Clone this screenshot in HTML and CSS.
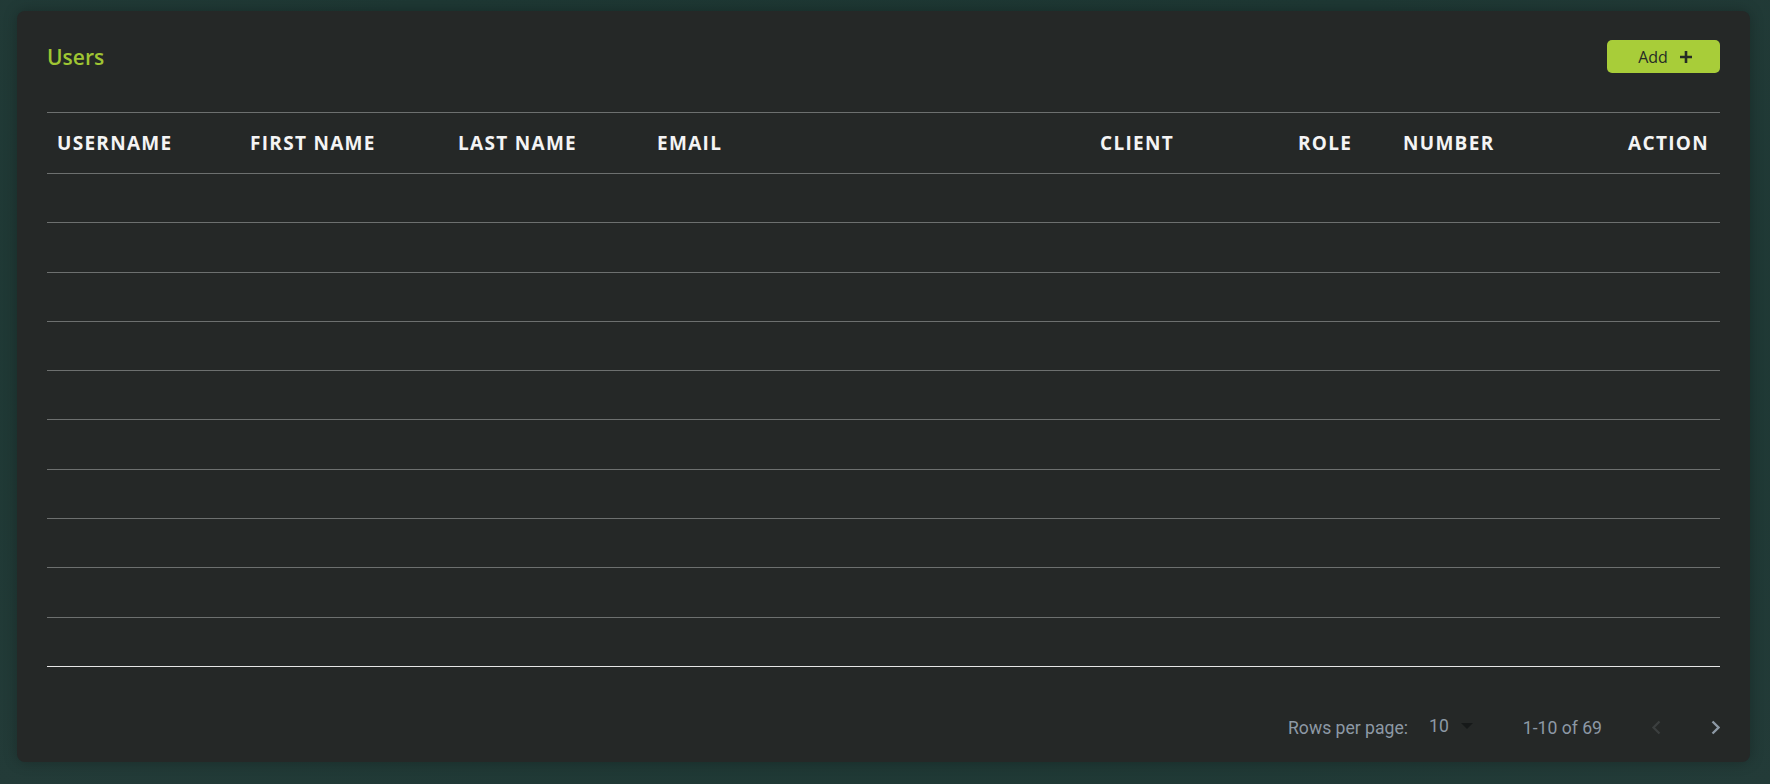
FILE: index.html
```html
<!DOCTYPE html>
<html lang="en">

<head>
    <meta charset="UTF-8">
    <meta name="viewport" content="width=device-width, initial-scale=1.0">
    <title>Users</title>
    <link rel="stylesheet" href="styles.css">
</head>

<body>
    <div class="card">
        <div class="card-head">
            <h2 class="title">Users</h2>
            <button class="add-btn" type="button">Add
                <svg width="14" height="14" viewBox="0 0 14 14"><path d="M7 1v12M1 7h12" stroke="#252a25" stroke-width="2.6"/></svg>
            </button>
        </div>

        <table class="users">
            <colgroup>
                <col class="c-user">
                <col class="c-first">
                <col class="c-last">
                <col class="c-email">
                <col class="c-client">
                <col class="c-role">
                <col class="c-number">
                <col class="c-action">
            </colgroup>
            <thead>
                <tr>
                    <th>Username</th>
                    <th>First name</th>
                    <th>Last name</th>
                    <th>Email</th>
                    <th>Client</th>
                    <th>Role</th>
                    <th>Number</th>
                    <th class="right">Action</th>
                </tr>
            </thead>
            <tbody>
                <tr><td></td><td></td><td></td><td></td><td></td><td></td><td></td><td></td></tr>
                <tr><td></td><td></td><td></td><td></td><td></td><td></td><td></td><td></td></tr>
                <tr><td></td><td></td><td></td><td></td><td></td><td></td><td></td><td></td></tr>
                <tr><td></td><td></td><td></td><td></td><td></td><td></td><td></td><td></td></tr>
                <tr><td></td><td></td><td></td><td></td><td></td><td></td><td></td><td></td></tr>
                <tr><td></td><td></td><td></td><td></td><td></td><td></td><td></td><td></td></tr>
                <tr><td></td><td></td><td></td><td></td><td></td><td></td><td></td><td></td></tr>
                <tr><td></td><td></td><td></td><td></td><td></td><td></td><td></td><td></td></tr>
                <tr><td></td><td></td><td></td><td></td><td></td><td></td><td></td><td></td></tr>
                <tr class="last"><td></td><td></td><td></td><td></td><td></td><td></td><td></td><td></td></tr>
            </tbody>
        </table>

        <div class="pager">
            <span class="rows-label">Rows per page:</span>
            <span class="rows-select">10
                <svg width="12" height="6" viewBox="0 0 12 6"><path d="M0 0h12L6 6z" fill="#161919"/></svg>
            </span>
            <span class="range">1-10 of 69</span>
            <span class="nav prev">
                <svg width="10" height="15" viewBox="0 0 10 15"><path d="M8.5 1.5 2.5 7.5 8.5 13.5" fill="none" stroke="#3b3f3f" stroke-width="2.3"/></svg>
            </span>
            <span class="nav next">
                <svg width="10" height="15" viewBox="0 0 10 15"><path d="M2.5 1.5 8.5 7.5 2.5 13.5" fill="none" stroke="#8d99a5" stroke-width="2.3"/></svg>
            </span>
        </div>
    </div>
</body>

</html>
```

FILE: styles.css
```css
   html,
   body {
       margin: 0;
       height: 100%;
   }

   body {
       background: radial-gradient(ellipse at 50% 40%, #1c3631 0%, #1e3834 60%, #233b38 100%);
       font-family: "Open Sans", sans-serif;
       overflow: hidden;
   }

   .card {
       box-sizing: border-box;
       width: 1733px;
       height: 751px;
       margin: 11px 0 0 17px;
       padding: 29px 30px 8px 30px;
       background: #252827;
       border-radius: 8px;
       box-shadow: 0 0 14px rgba(0, 0, 0, 0.25);
   }

   .card-head {
       display: flex;
       align-items: center;
       justify-content: space-between;
       height: 33px;
   }

   .title {
       margin: 0;
       font-size: 21px;
       font-weight: 600;
       color: #9fc533;
   }

   .add-btn {
       display: flex;
       align-items: center;
       justify-content: center;
       gap: 11px;
       width: 113px;
       height: 33px;
       padding: 0 0 0 4px;
       border: none;
       border-radius: 5px;
       background: #a8cd39;
       color: #262b26;
       font-family: "Open Sans", sans-serif;
       font-size: 16px;
       font-weight: 500;
       cursor: pointer;
   }

   .users {
       width: 100%;
       margin-top: 39px;
       border-collapse: collapse;
       table-layout: fixed;
   }

   .c-user { width: 193px; }
   .c-first { width: 208px; }
   .c-last { width: 199px; }
   .c-email { width: 443px; }
   .c-client { width: 198px; }
   .c-role { width: 105px; }
   .c-number { width: 160px; }

   .users thead tr {
       border-top: 1px solid #6d706f;
       border-bottom: 1px solid #6d706f;
   }

   .users th {
       height: 60px;
       padding: 0 10px;
       text-align: left;
       font-size: 19px;
       font-weight: 700;
       letter-spacing: 1.3px;
       text-transform: uppercase;
       color: #f4f4f4;
   }

   .users th.right {
       text-align: right;
       padding-right: 11px;
   }

   .users tbody tr {
       height: 49.3px;
       border-bottom: 1px solid #6d706f;
   }

   .users tbody tr.last {
       border-bottom-color: #e6e6e6;
   }

   .users td {
       padding: 0;
   }

   .pager {
       display: flex;
       align-items: center;
       justify-content: flex-end;
       height: 52px;
       margin-top: 35px;
       font-family: Roboto, sans-serif;
       font-size: 17.6px;
       color: #8d99a5;
   }

   .rows-select {
       display: flex;
       align-items: center;
       gap: 12px;
       margin-left: 21px;
       margin-top: -4px;
   }

   .range {
       margin-left: 50px;
   }

   .nav {
       display: flex;
       align-items: center;
       height: 15px;
   }

   .prev {
       margin-left: 49px;
   }

   .next {
       margin-left: 49px;
   }
```
